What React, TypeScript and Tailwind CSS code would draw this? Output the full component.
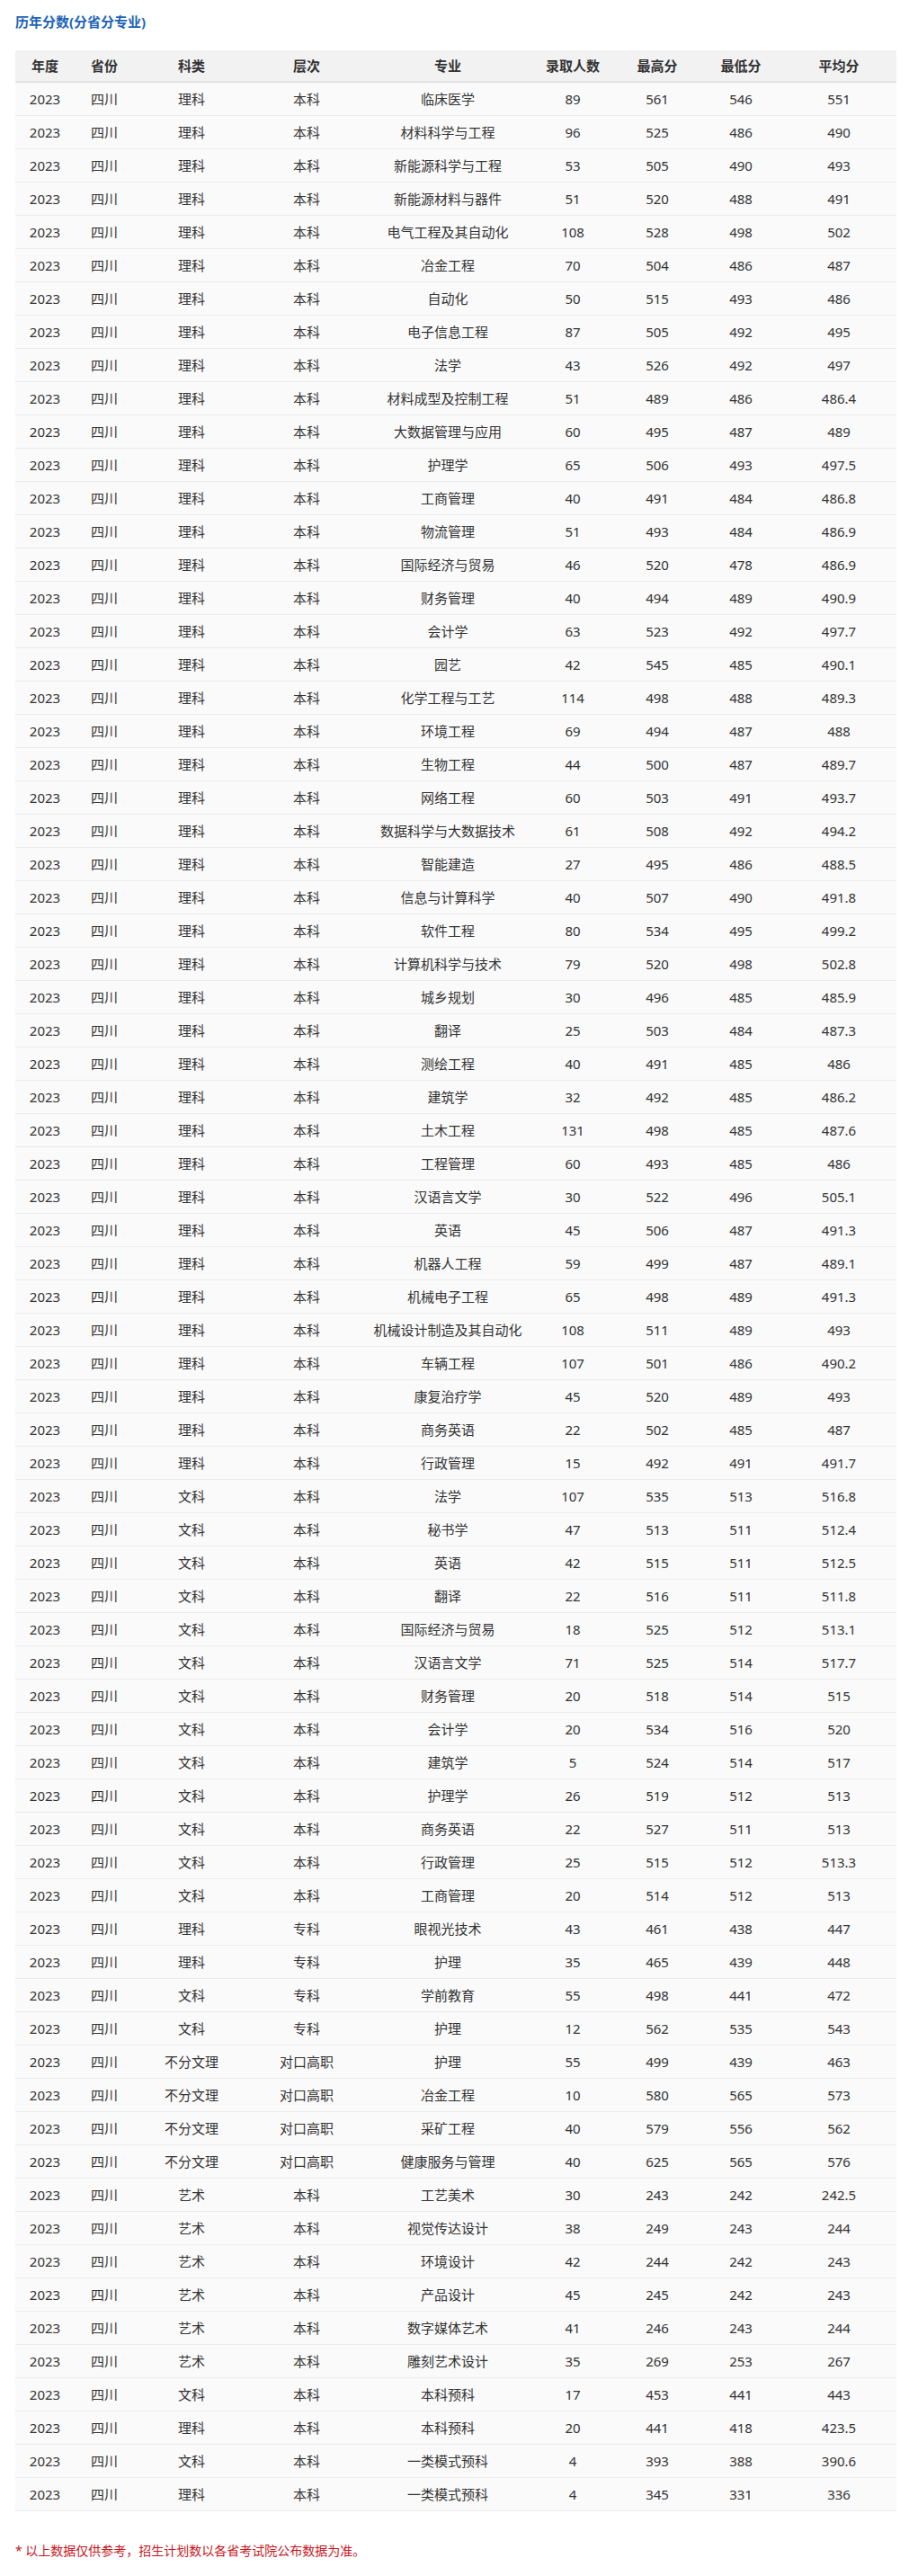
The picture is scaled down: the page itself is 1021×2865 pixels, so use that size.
import React from 'react';

// 科类, 层次, 专业, 录取人数, 最高分, 最低分, 平均分
const rows: string[][] = [
  ['理科', '本科', '临床医学', '89', '561', '546', '551'],
  ['理科', '本科', '材料科学与工程', '96', '525', '486', '490'],
  ['理科', '本科', '新能源科学与工程', '53', '505', '490', '493'],
  ['理科', '本科', '新能源材料与器件', '51', '520', '488', '491'],
  ['理科', '本科', '电气工程及其自动化', '108', '528', '498', '502'],
  ['理科', '本科', '冶金工程', '70', '504', '486', '487'],
  ['理科', '本科', '自动化', '50', '515', '493', '486'],
  ['理科', '本科', '电子信息工程', '87', '505', '492', '495'],
  ['理科', '本科', '法学', '43', '526', '492', '497'],
  ['理科', '本科', '材料成型及控制工程', '51', '489', '486', '486.4'],
  ['理科', '本科', '大数据管理与应用', '60', '495', '487', '489'],
  ['理科', '本科', '护理学', '65', '506', '493', '497.5'],
  ['理科', '本科', '工商管理', '40', '491', '484', '486.8'],
  ['理科', '本科', '物流管理', '51', '493', '484', '486.9'],
  ['理科', '本科', '国际经济与贸易', '46', '520', '478', '486.9'],
  ['理科', '本科', '财务管理', '40', '494', '489', '490.9'],
  ['理科', '本科', '会计学', '63', '523', '492', '497.7'],
  ['理科', '本科', '园艺', '42', '545', '485', '490.1'],
  ['理科', '本科', '化学工程与工艺', '114', '498', '488', '489.3'],
  ['理科', '本科', '环境工程', '69', '494', '487', '488'],
  ['理科', '本科', '生物工程', '44', '500', '487', '489.7'],
  ['理科', '本科', '网络工程', '60', '503', '491', '493.7'],
  ['理科', '本科', '数据科学与大数据技术', '61', '508', '492', '494.2'],
  ['理科', '本科', '智能建造', '27', '495', '486', '488.5'],
  ['理科', '本科', '信息与计算科学', '40', '507', '490', '491.8'],
  ['理科', '本科', '软件工程', '80', '534', '495', '499.2'],
  ['理科', '本科', '计算机科学与技术', '79', '520', '498', '502.8'],
  ['理科', '本科', '城乡规划', '30', '496', '485', '485.9'],
  ['理科', '本科', '翻译', '25', '503', '484', '487.3'],
  ['理科', '本科', '测绘工程', '40', '491', '485', '486'],
  ['理科', '本科', '建筑学', '32', '492', '485', '486.2'],
  ['理科', '本科', '土木工程', '131', '498', '485', '487.6'],
  ['理科', '本科', '工程管理', '60', '493', '485', '486'],
  ['理科', '本科', '汉语言文学', '30', '522', '496', '505.1'],
  ['理科', '本科', '英语', '45', '506', '487', '491.3'],
  ['理科', '本科', '机器人工程', '59', '499', '487', '489.1'],
  ['理科', '本科', '机械电子工程', '65', '498', '489', '491.3'],
  ['理科', '本科', '机械设计制造及其自动化', '108', '511', '489', '493'],
  ['理科', '本科', '车辆工程', '107', '501', '486', '490.2'],
  ['理科', '本科', '康复治疗学', '45', '520', '489', '493'],
  ['理科', '本科', '商务英语', '22', '502', '485', '487'],
  ['理科', '本科', '行政管理', '15', '492', '491', '491.7'],
  ['文科', '本科', '法学', '107', '535', '513', '516.8'],
  ['文科', '本科', '秘书学', '47', '513', '511', '512.4'],
  ['文科', '本科', '英语', '42', '515', '511', '512.5'],
  ['文科', '本科', '翻译', '22', '516', '511', '511.8'],
  ['文科', '本科', '国际经济与贸易', '18', '525', '512', '513.1'],
  ['文科', '本科', '汉语言文学', '71', '525', '514', '517.7'],
  ['文科', '本科', '财务管理', '20', '518', '514', '515'],
  ['文科', '本科', '会计学', '20', '534', '516', '520'],
  ['文科', '本科', '建筑学', '5', '524', '514', '517'],
  ['文科', '本科', '护理学', '26', '519', '512', '513'],
  ['文科', '本科', '商务英语', '22', '527', '511', '513'],
  ['文科', '本科', '行政管理', '25', '515', '512', '513.3'],
  ['文科', '本科', '工商管理', '20', '514', '512', '513'],
  ['理科', '专科', '眼视光技术', '43', '461', '438', '447'],
  ['理科', '专科', '护理', '35', '465', '439', '448'],
  ['文科', '专科', '学前教育', '55', '498', '441', '472'],
  ['文科', '专科', '护理', '12', '562', '535', '543'],
  ['不分文理', '对口高职', '护理', '55', '499', '439', '463'],
  ['不分文理', '对口高职', '冶金工程', '10', '580', '565', '573'],
  ['不分文理', '对口高职', '采矿工程', '40', '579', '556', '562'],
  ['不分文理', '对口高职', '健康服务与管理', '40', '625', '565', '576'],
  ['艺术', '本科', '工艺美术', '30', '243', '242', '242.5'],
  ['艺术', '本科', '视觉传达设计', '38', '249', '243', '244'],
  ['艺术', '本科', '环境设计', '42', '244', '242', '243'],
  ['艺术', '本科', '产品设计', '45', '245', '242', '243'],
  ['艺术', '本科', '数字媒体艺术', '41', '246', '243', '244'],
  ['艺术', '本科', '雕刻艺术设计', '35', '269', '253', '267'],
  ['文科', '本科', '本科预科', '17', '453', '441', '443'],
  ['理科', '本科', '本科预科', '20', '441', '418', '423.5'],
  ['文科', '本科', '一类模式预科', '4', '393', '388', '390.6'],
  ['理科', '本科', '一类模式预科', '4', '345', '331', '336'],
];

const headers = ['年度', '省份', '科类', '层次', '专业', '录取人数', '最高分', '最低分', '平均分'];

const cols = 'grid grid-cols-[66px_66px_128px_128px_186px_92px_96px_90px_128px]';

export default function App() {
  return (
    <div className="min-h-screen bg-white px-[17px] pt-[12px] pb-[18px] font-['Noto_Sans','Noto_Sans_CJK_SC',sans-serif] text-[#333]">
      <h2 className="h-[24px] text-[15px] font-bold leading-[24px] text-[#1d63b8]">历年分数(分省分专业)</h2>

      <div className="mt-[20px] w-[980px]">
        <div className={`${cols} h-[36px] items-center border-b-2 border-[#e2e2e2] bg-[#f2f2f2] text-[15px] font-semibold`}>
          {headers.map((h) => (
            <div key={h} className="text-center">
              {h}
            </div>
          ))}
        </div>
        {rows.map((r, i) => (
          <div key={i} className={`${cols} h-[37px] items-center border-b border-[#ececec] bg-[#fafafa] text-[15px]`}>
            <div className="text-center">2023</div>
            <div className="text-center">四川</div>
            {r.map((c, j) => (
              <div key={j} className="text-center">
                {c}
              </div>
            ))}
          </div>
        ))}
      </div>

      <p className="mt-[34px] text-[14px] leading-[20px] text-[#c8161d]">* 以上数据仅供参考，招生计划数以各省考试院公布数据为准。</p>
    </div>
  );
}
